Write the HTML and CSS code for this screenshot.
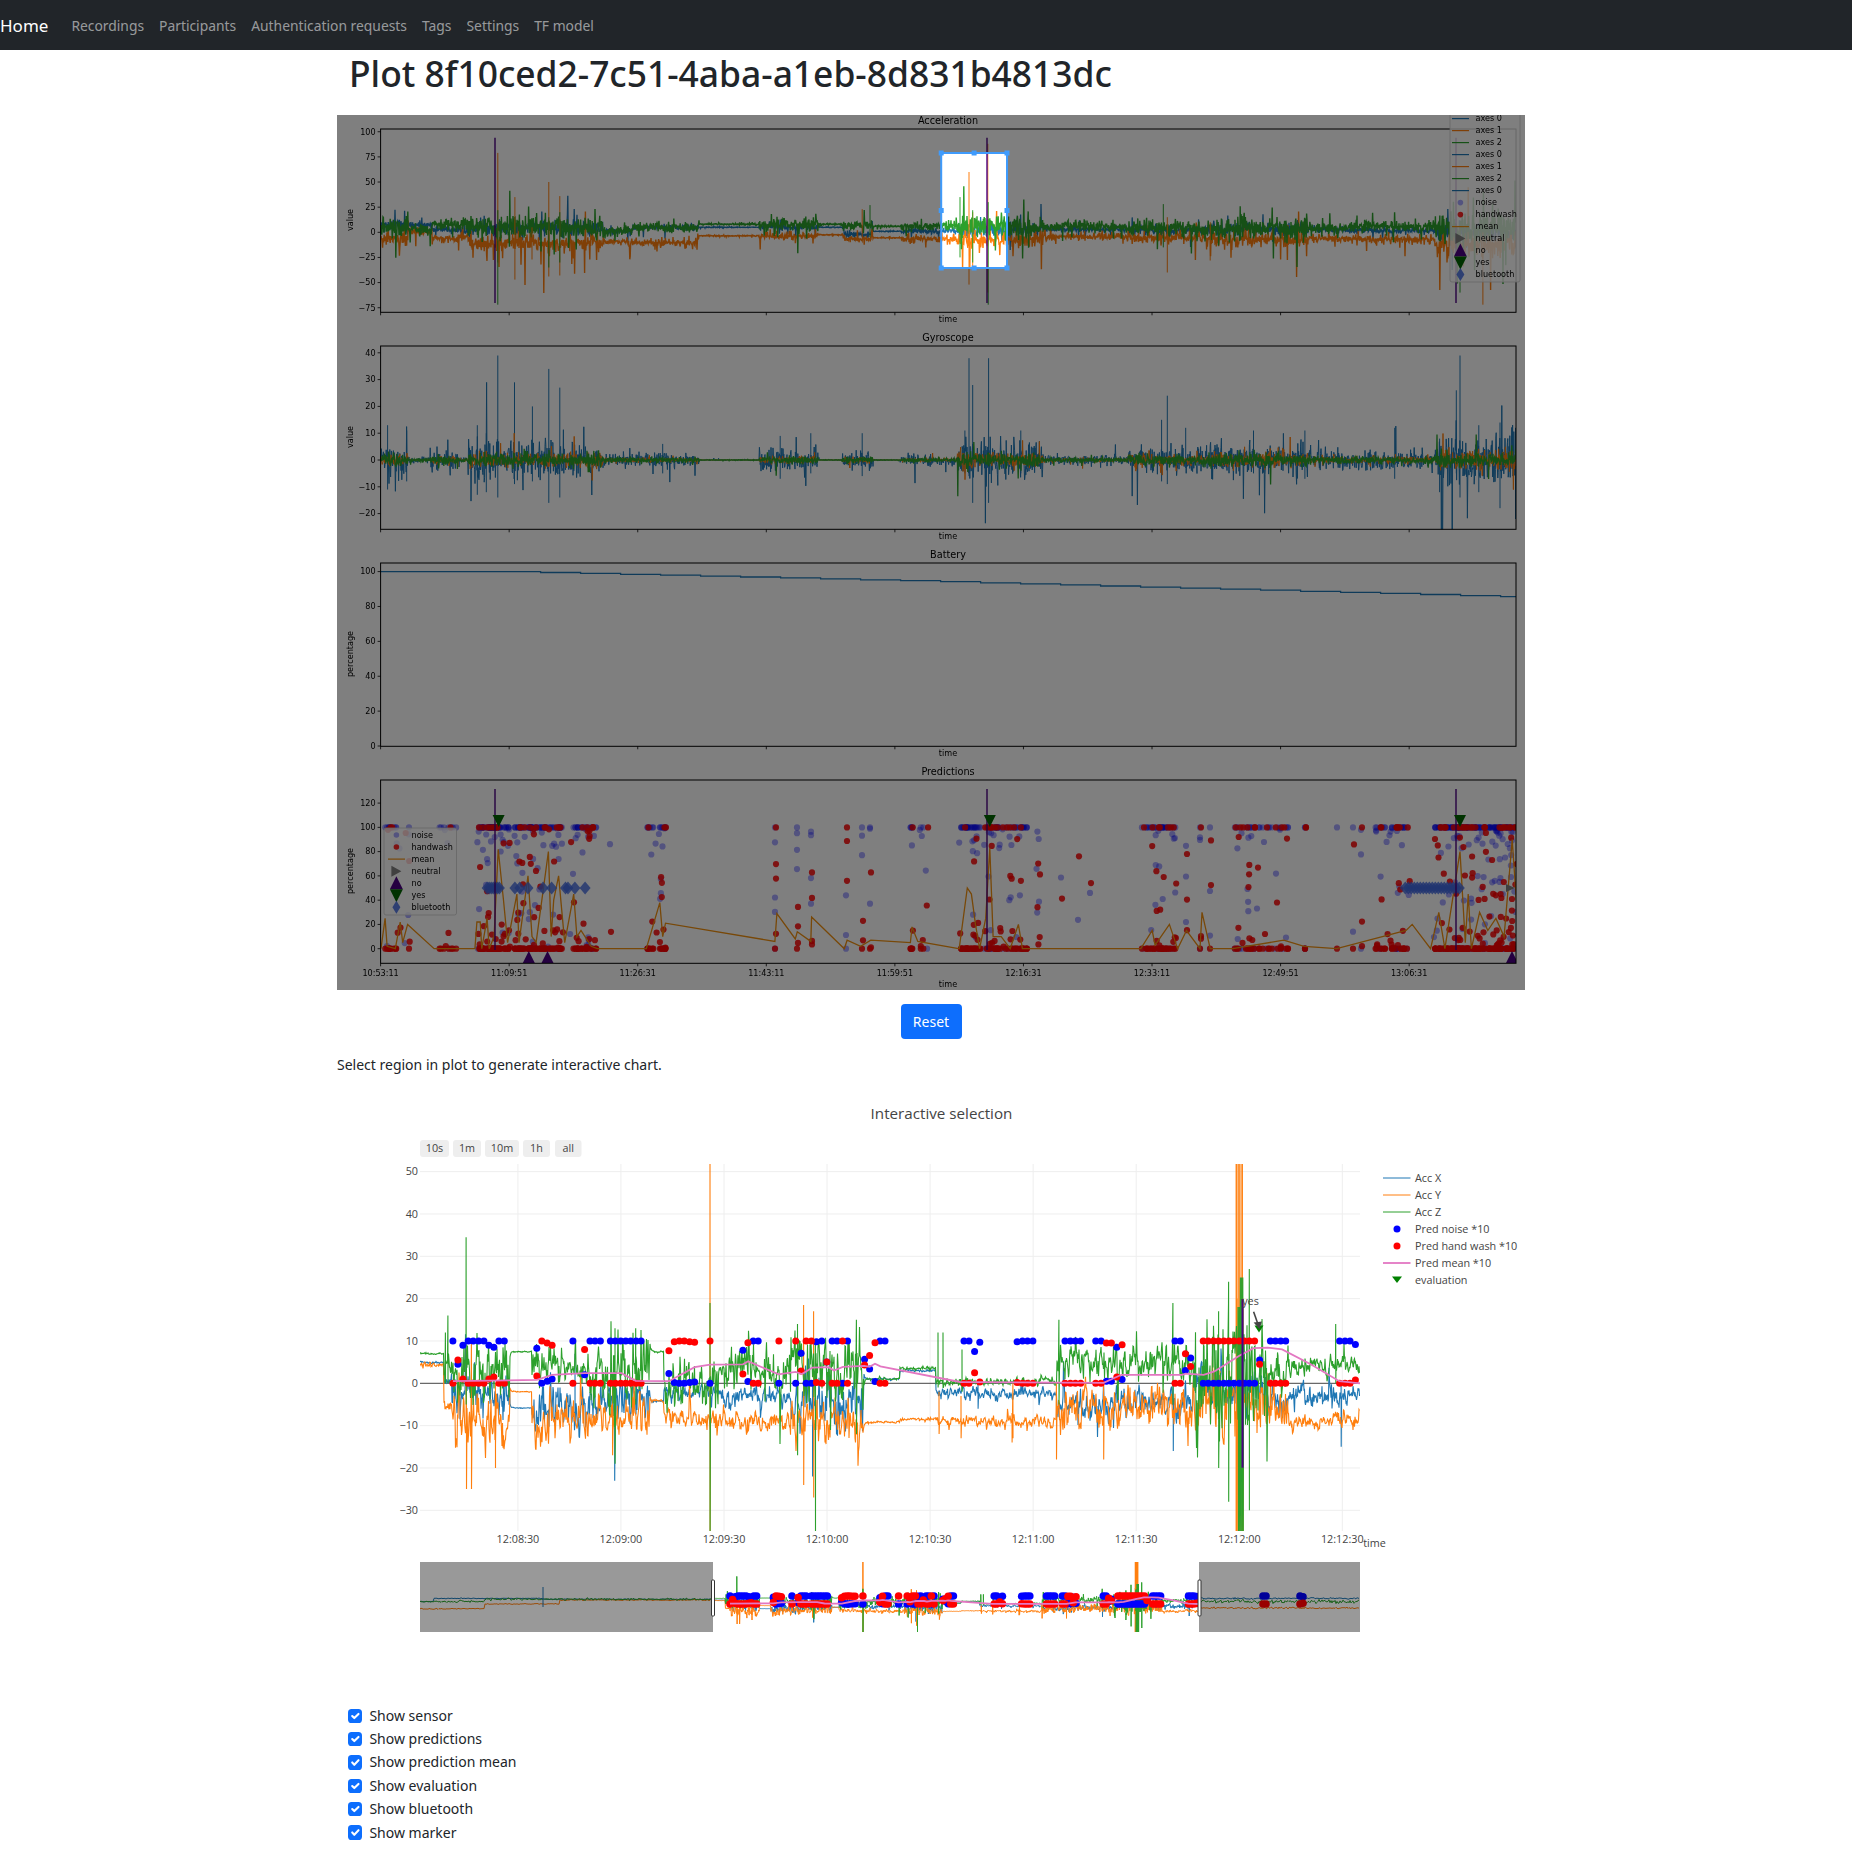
FILE: index.html
```html
<!DOCTYPE html>
<html lang="en">
<head>
  <meta charset="UTF-8" />
  <meta name="viewport" content="width=device-width, initial-scale=1.0" />
  <title>Plot 8f10ced2-7c51-4aba-a1eb-8d831b4813dc</title>
  <link rel="stylesheet" href="styles.css">
</head>
<body>

  <nav class="navbar">
    <a class="navbar-brand" href="#">Home</a>
    <a class="nav-link" href="#">Recordings</a>
    <a class="nav-link" href="#">Participants</a>
    <a class="nav-link" href="#">Authentication requests</a>
    <a class="nav-link" href="#">Tags</a>
    <a class="nav-link" href="#">Settings</a>
    <a class="nav-link" href="#">TF model</a>
  </nav>

  <main class="container">
    <h1>Plot 8f10ced2-7c51-4aba-a1eb-8d831b4813dc</h1>

    <!-- Static overview with the crop selection on top -->
    <svg id="overview" class="overview" viewBox="337 115 1188 875"></svg>

    <div class="reset-row">
      <button class="btn-primary" type="button">Reset</button>
    </div>

    <p class="hint">Select region in plot to generate interactive chart.</p>

    <!-- Interactive selection with range slider -->
    <svg id="chart" class="chart" viewBox="337 1085 1188 610"></svg>

    <form class="toggles">
      <label class="form-check"><input type="checkbox" checked /> Show sensor</label>
      <label class="form-check"><input type="checkbox" checked /> Show predictions</label>
      <label class="form-check"><input type="checkbox" checked /> Show prediction mean</label>
      <label class="form-check"><input type="checkbox" checked /> Show evaluation</label>
      <label class="form-check"><input type="checkbox" checked /> Show bluetooth</label>
      <label class="form-check"><input type="checkbox" checked /> Show marker</label>
    </form>
  </main>

  <script src="plot.js"></script>

</body>
</html>
```
FILE: styles.css
```css
body {
  font-family: "Noto Sans", sans-serif;
  font-size: 14px;
  line-height: 24px;
  margin: 0;
  padding: 0;
  background: #fff;
  color: #212529;
}

.navbar {
  display: flex;
  align-items: center;
  gap: 15px;
  box-sizing: border-box;
  height: 50px;
  padding-top: 2px;
  background: #212529;
}

.navbar-brand {
  color: #fff;
  font-size: 17px;
  text-decoration: none;
  margin-right: 8px;
}

.nav-link {
  color: rgba(255, 255, 255, 0.55);
  font-size: 13.85px;
  text-decoration: none;
}

.container {
  width: 1188px;
  margin-left: 337px;
}

h1 {
  font-size: 35.4px;
  font-weight: 500;
  line-height: 46px;
  margin: 0 0 19px;
  padding-left: 12px;
  white-space: nowrap;
}

.overview {
  display: block;
  width: 1188px;
  height: 875px;
  filter: blur(0.3px);
}

.reset-row {
  display: flex;
  justify-content: center;
  margin-top: 14px;
}

.btn-primary {
  width: 61px;
  height: 35px;
  padding: 0;
  background-color: #0d6efd;
  color: white;
  border: none;
  border-radius: 4px;
  font-family: inherit;
  font-size: 14px;
}

.hint {
  margin: 14px 0 8px;
}

.chart {
  display: block;
  width: 1188px;
  height: 610px;
}

.toggles {
  margin-top: 9px;
  padding-left: 11px;
}

.form-check {
  display: flex;
  align-items: center;
  gap: 7px;
  height: 23.4px;
}

.form-check input {
  appearance: none;
  width: 14.4px;
  height: 14.4px;
  margin: 0;
  border-radius: 3.6px;
  background-color: #0d6efd;
  background-image: url("data:image/svg+xml,%3csvg xmlns='http://www.w3.org/2000/svg' viewBox='0 0 20 20'%3e%3cpath fill='none' stroke='%23fff' stroke-linecap='round' stroke-linejoin='round' stroke-width='3' d='M6 10l3 3l6-6'/%3e%3c/svg%3e");
}

/* svg text */
.mpl {
  font-family: "DejaVu Sans", sans-serif;
  font-size: 8.1px;
  fill: #000;
}

.mpl-title {
  font-size: 9.7px;
}

.pl {
  font-family: "Open Sans", sans-serif;
  font-size: 10.8px;
  fill: #444;
}

.pl-title {
  font-size: 15.2px;
}
```
FILE: plot.js
```js
// Small seeded generator so the noise comes out the same on every load
let seed = 20240;
function rnd() {
  seed = (seed + 0x6D2B79F5) | 0;
  let t = Math.imul(seed ^ (seed >>> 15), 1 | seed);
  t = (t + Math.imul(t ^ (t >>> 7), 61 | t)) ^ t;
  return ((t ^ (t >>> 14)) >>> 0) / 4294967296;
}
function randn() {
  return Math.sqrt(-2 * Math.log(rnd() + 1e-6)) * Math.cos(6.2832 * rnd());
}
function heavy() {
  return randn() * (rnd() < 0.08 ? 2.2 : 0.7);
}
function calm() {
  return randn() * (rnd() < 0.04 ? 1.7 : 0.5);
}

function pathOf(pts) {
  return 'M' + pts.map(p => p[0].toFixed(1) + ' ' + p[1].toFixed(1)).join('L');
}
function stroke(d, color, w, extra) {
  return `<path d="${d}" fill="none" stroke="${color}" stroke-width="${w}" ${extra || ''}/>`;
}
function label(x, y, s, cls, anchor, extra) {
  return `<text x="${x}" y="${y}" dy=".35em" class="${cls}" text-anchor="${anchor || 'middle'}" ${extra || ''}>${s}</text>`;
}
function dot(x, y, r, color, op) {
  return `<circle cx="${x.toFixed(1)}" cy="${y.toFixed(1)}" r="${r}" fill="${color}" ${op ? `opacity="${op}"` : ''}/>`;
}
function tri(x, y, w, h, color) {
  return `<path d="M${x - w} ${y + h}L${x + w} ${y + h}L${x} ${y - h}Z" fill="${color}"/>`;
}

/* ---------- overview (matplotlib figure) ---------- */

const L = 380.6, R = 1516;
const BLUE = '#1f77b4', ORANGE = '#ff7f0e', GREEN = '#2ca02c', INDIGO = '#4b0082';
const MEAN = '#f09010', ROYAL = '#4169e1';
const z2 = v => 330 + v / 2.45;
const z3 = v => 900 + v / 2.45;

// [right edge, amplitude of the movement]
const ENV = [[408, 5], [430, 1], [459, 3], [468, 1], [603, 6], [699, 2], [759, 0.2], [818, 3], [842, 0.2],
  [873, 2.5], [901, 0.2], [957, 1.5], [1043, 6], [1128, 1.5], [1210, 4], [1308, 6], [1435, 3], [1517, 8]];
function env(x) {
  return ENV.find(e => x <= e[0])[1];
}

// [right edge, axis 0, axis 1, axis 2]
const LEVELS = [[408, 7, -3, 5], [432, 7, 2, 3], [461, 3, -4, 8], [471, 1, -3, 9], [603, 4, -7, 5], [632, 1, -8, 2],
  [697, 5, -9, 5], [759, 5, -3, 8], [844, 5, -2, 8], [871, -2, -5, 7], [942, 1, -5, 6], [1007, 2, -5, 6],
  [1128, 3, -3, 6], [1210, 2, -3, 4], [1349, 3, -4, 4], [1435, 2, -5, 6], [1517, 0, -8, 4]];

function noisy(yOf, valueAt) {
  const pts = [];
  for (let x = L; x < R; x += 0.4) pts.push([x, yOf(valueAt(x))]);
  return pathOf(pts);
}

function spikes(list, yOf, color) {
  return list.map(s => stroke(`M${s[0].toFixed(1)} ${yOf(s[1]).toFixed(1)}V${yOf(s[2]).toFixed(1)}`, color, 1)).join('');
}

function frame(top, title, ylabel, yOf, ticks, timeY) {
  const bottom = top + 183.3;
  let s = `<rect x="${L}" y="${top}" width="${R - L}" height="183.3" fill="none" stroke="#000" stroke-width="1"/>`;
  for (let i = 0; i < 9; i++) {
    const x = L + 128.57 * i;
    s += stroke(`M${x} ${bottom}v3`, '#000', 0.8);
  }
  ticks.forEach(t => {
    s += stroke(`M${L} ${yOf(t)}h-3`, '#000', 0.8);
    s += label(L - 5, yOf(t), String(t).replace('-', '−'), 'mpl', 'end');
  });
  s += label(948, top - 8, title, 'mpl mpl-title');
  s += label(948, timeY || bottom + 7, 'time', 'mpl');
  const ly = top + 91;
  s += label(350, ly, ylabel, 'mpl', 'middle', `transform="rotate(-90 350 ${ly})"`);
  return s;
}

function marks(x, y0, y1) {
  return stroke(`M${x} ${y0}V${y1}`, INDIGO, 1.4);
}

function legend(x, y, h, rows, step, firstY) {
  let s = `<rect x="${x}" y="${y}" width="${rows.w}" height="${h}" rx="2" fill="#fff" fill-opacity=".8" stroke="#ccc" stroke-width=".8"/>`;
  const dx = rows.dx || 0;
  rows.items.forEach((it, i) => {
    const ry = firstY + step * i;
    const mx = x + dx + 10.4;
    if (it[1] === 'line') s += stroke(`M${x + dx + 2} ${ry}h17`, it[2], 1.2);
    if (it[1] === 'noise') s += dot(mx, ry, 2.8, '#0000ff', 0.35);
    if (it[1] === 'hand') s += dot(mx, ry, 2.8, '#ff0000', 0.85);
    if (it[1] === 'neutral') s += `<path d="M${mx - 5} ${ry - 5.5}L${mx + 5} ${ry}L${mx - 5} ${ry + 5.5}Z" fill="#808080"/>`;
    if (it[1] === 'no') s += tri(mx, ry - 0.5, 6.5, 6.5, INDIGO);
    if (it[1] === 'yes') s += tri(mx, ry + 0.5, 6.5, -6.5, '#006400');
    if (it[1] === 'bt') s += `<path d="M${mx} ${ry - 6.5}L${mx + 4} ${ry}L${mx} ${ry + 6.5}L${mx - 4} ${ry}Z" fill="${ROYAL}" opacity=".85"/>`;
    s += label(x + dx + 25.5, ry, it[0], 'mpl', 'start');
  });
  return s;
}

function drawOverview() {
  const ya = v => 232.3 - v * 1.0056;
  const yg = v => 460 - v * 2.68;
  const yb = v => 746 - v * 1.744;
  const yp = v => 948.7 - v * 1.2135;
  let s = '<rect x="337" y="115" width="1188" height="875" fill="#fff"/>';

  // acceleration
  s += `<clipPath id="c1"><rect x="${L}" y="129" width="${R - L}" height="183.3"/></clipPath><g clip-path="url(#c1)">`;
  const level = (x, ch) => LEVELS.find(e => x <= e[0])[ch];
  const wide = x => (env(x) < 0.5 ? 0.5 : Math.max(env(x), 2.5) * 1.35);
  s += stroke(noisy(ya, x => level(x, 1) + wide(x) * 0.6 * heavy()), BLUE, 1.3);
  s += stroke(noisy(ya, x => level(x, 2) + wide(x) * 0.9 * (rnd() < 0.7 ? -Math.abs(heavy()) : heavy()) - 0.3), ORANGE, 1.4);
  s += stroke(noisy(ya, x => level(x, 3) + wide(x) * 1.0 * heavy()), GREEN, 1.4);
  s += spikes([[z2(411), 79, -30], [z2(453), 35, -47], [z2(495), 5, -27], [z2(536), 50, -44], [z2(563), 36, -43], [z2(1304), 23, -5],
    [z3(169), 60, -52], [z3(178), 20, -35], [z3(215), 88, -60], [z3(655), 15, -40], [z3(760), 10, -28], [z3(1428), 0, -72]], ya, ORANGE);
  s += spikes([[z2(411), 22, -72], [z2(536), 15, -35], [z2(563), 20, -30], [z2(1323), 27, -5], [z3(147), 35, -25], [z3(178), 22, -30],
    [z3(216), 30, -72], [z3(645), 28, -15], [z3(1372), 8, -60]], ya, GREEN);
  s += marks(495, 137.7, 303) + marks(987, 137.7, 303) + marks(1456, 137.7, 303);
  s += '</g>';
  s += frame(129, 'Acceleration', 'value', ya, [100, 75, 50, 25, 0, -25, -50, -75]);

  // gyroscope
  s += `<clipPath id="c2"><rect x="${L}" y="346" width="${R - L}" height="183.3"/></clipPath><g clip-path="url(#c2)">`;
  s += stroke(noisy(yg, x => env(x) * 1.2 * calm()), BLUE, 1);
  s += spikes([[411, 39, -14], [452, 29, -9], [496, 20, -8], [536, 34, -16], [563, 27, -14], [361, 13, -13], [141, 13, -11], [188, 11, -8],
    [383, 10, -12], [1103, 9, -7], [1178, 10, -5], [1304, 10, -6], [815, 6, -5]].map(e => [z2(e[0]), e[1], e[2]]), yg, BLUE);
  s += spikes([[169, 38, -6], [178, 28, -16], [159, 11, -5], [217, 38, -16], [296, 11, -5], [655, 24, -9], [641, 15, -8], [700, 12, -3],
    [866, 11, -5], [992, 11, -7], [1212, 12, -7], [1363, 26, -5], [1372, 39, -14], [1418, 13, -12], [1470, 14, -18], [1508, 12, -22], [1322, 8, -12]]
    .map(e => [z3(e[0]), e[1], e[2]]), yg, BLUE);
  s += stroke(noisy(yg, x => env(x) * 0.45 * calm()), ORANGE, 1);
  s += stroke(noisy(yg, x => Math.min(env(x), 5) * 0.5 * calm()), GREEN, 1.3);
  s += '</g>';
  s += frame(346, 'Gyroscope', 'value', yg, [40, 30, 20, 10, 0, -10, -20]);

  // battery
  const bat = [];
  let charge = 100;
  for (let x = L; x < R; x += 40) {
    bat.push([x, yb(charge)]);
    bat.push([Math.min(x + 40, R), yb(charge)]);
    if (x > 470) charge -= 0.52;
    if (x > 900) charge -= 0.09;
  }
  s += stroke(pathOf(bat), BLUE, 1.3);
  s += frame(563, 'Battery', 'percentage', yb, [100, 80, 60, 40, 20, 0]);

  // predictions
  const clusters = [[383, 410, 18], [434, 461, 10], [477, 510, 70], [514, 563, 90], [570, 597, 34], [610, 610, 1], [644, 667, 24],
    [775, 775, 5], [797, 797, 4], [811, 811, 4], [846, 846, 3], [862, 862, 3], [870, 870, 3], [910, 928, 12], [959, 1027, 90], [1036, 1040, 5],
    [1061, 1061, 1], [1078, 1078, 1], [1090, 1090, 1], [1141, 1178, 42], [1186, 1186, 3], [1200, 1200, 4], [1210, 1210, 3], [1232, 1288, 44],
    [1305, 1305, 4], [1337, 1337, 1], [1353, 1353, 2], [1361, 1361, 3], [1374, 1410, 36], [1433, 1516, 180]];
  let blues = '', reds = '';
  clusters.forEach(c => {
    for (let i = 0; i < c[2]; i++) {
      const x = c[0] + rnd() * (c[1] - c[0]);
      const k = rnd();
      const spread = c[1] - c[0] < 5 ? 0.3 : 0.55;
      let v = rnd() * 100;
      if (k < spread) v = 100;
      else if (k < spread + 0.15) v = 0;
      else if (k < spread + 0.27) v = 100 - rnd() * 18;
      blues += dot(x, yp(v), 3.1, '#0000ff', 0.35);
      reds += dot(x + (v === 100 ? 0 : 1), yp(100 - v), 3.1, '#ff0000', 0.85);
    }
  });

  const m4 = [[125, 0], [135, 25], [140, 2], [160, 0], [172, 22], [178, 5], [190, 20], [255, 0], [355, 0], [360, 22], [368, 22], [372, 0], [385, 25], [390, 0],
    [402, 10], [412, 82], [425, 40], [435, 5], [458, 45], [463, 5], [485, 60], [495, 10], [505, 5], [535, 80], [542, 10], [548, 40], [560, 60], [575, 5],
    [597, 45], [605, 10], [615, 15], [640, 2], [655, 0], [775, 0], [808, 38], [815, 10], [822, 21], [1090, 6], [1095, 29], [1140, 8], [1145, 14],
    [1178, 6], [1180, 26], [1260, 0], [1267, 7], [1300, 2], [1325, 7], [1422, 5], [1426, 18], [1440, 6], [1540, 0]].map(p => [330 + p[0] / 2.45, yp(p[1])]);
  const m5 = [[145, 0], [165, 50], [175, 45], [185, 20], [195, 0], [210, 25], [220, 83], [228, 10], [248, 10], [270, 0], [290, 20], [300, 0], [590, 0], [618, 15],
    [625, 3], [660, 20], [680, 0], [702, 15], [735, 0], [740, 30], [760, 0], [815, 0], [940, 7], [990, 2], [1070, 0], [1240, 15], [1255, 20], [1300, 0], [1320, 30],
    [1335, 0], [1372, 80], [1385, 5], [1392, 45], [1400, 0], [1420, 30], [1440, 15], [1460, 25], [1480, 10], [1500, 90], [1510, 40]].map(p => [z3(p[0]), yp(p[1])]);

  s += `<clipPath id="c4"><rect x="${L}" y="780" width="${R - L}" height="183.3"/></clipPath><g clip-path="url(#c4)">`;
  s += blues + reds;
  s += stroke(pathOf(m4.concat(m5)), MEAN, 1.3);

  const diamonds = [385, 390, 395, 400, 405, 410, 415, 453, 465, 485, 522, 543, 577, 583, 600, 625].map(z => 330 + z / 2.45);
  for (let x = z3(1238); x < z3(1375); x += 3) diamonds.push(x);
  diamonds.forEach(x => {
    s += `<path d="M${x} ${yp(50) - 6.5}L${x + 5.5} ${yp(50)}L${x} ${yp(50) + 6.5}L${x - 5.5} ${yp(50)}Z" fill="${ROYAL}" opacity=".8"/>`;
  });
  s += `<path d="M1506 ${yp(50) - 4}L1515 ${yp(50)}L1506 ${yp(50) + 4}Z" fill="#808080"/>`;
  s += marks(495, 789, 950) + marks(987, 789, 950) + marks(1456, 789, 950);
  [498.6, 989.8, 1460].forEach(x => { s += tri(x, 821, 6, -6, '#006400'); });
  [528.8, 547.5, 1512].forEach(x => { s += tri(x, 957, 6, 6, INDIGO); });
  s += '</g>';
  s += frame(780, 'Predictions', 'percentage', yp, [120, 100, 80, 60, 40, 20, 0], 984);

  // time labels under the last axes
  const times = ['10:53:11', '11:09:51', '11:26:31', '11:43:11', '11:59:51', '12:16:31', '12:33:11', '12:49:51', '13:06:31'];
  times.forEach((t, i) => { s += label(L + 128.57 * i, 972.7, t, 'mpl'); });

  // legends
  const tail = [['noise', 'noise'], ['handwash', 'hand'], ['mean', 'line', MEAN], ['neutral', 'neutral'], ['no', 'no'], ['yes', 'yes'], ['bluetooth', 'bt']];
  s += legend(384, 828, 87, { w: 72.5, dx: 2, items: tail }, 12.05, 835);
  const axesRows = [['axes 0', 'line', BLUE], ['axes 1', 'line', ORANGE], ['axes 2', 'line', GREEN], ['axes 0', 'line', BLUE], ['axes 1', 'line', ORANGE],
    ['axes 2', 'line', GREEN], ['axes 0', 'line', BLUE]];
  s += legend(1450, 113, 169, { w: 70, items: axesRows.concat(tail) }, 12, 118.6);

  // dim everything except the selection
  const sx0 = 941.2, sx1 = 1007, sy0 = 153, sy1 = 268;
  s += `<path fill-rule="evenodd" fill="#000" fill-opacity=".5" d="M337 115H1525V990H337ZM${sx0} ${sy0}V${sy1}H${sx1}V${sy0}Z"/>`;
  s += `<rect x="${sx0}" y="${sy0}" width="${sx1 - sx0}" height="${sy1 - sy0}" fill="none" stroke="#3f9bfc" stroke-width="2"/>`;
  const mx = (sx0 + sx1) / 2, my = (sy0 + sy1) / 2;
  [[sx0, sy0], [mx, sy0], [sx1, sy0], [sx0, my], [sx1, my], [sx0, sy1], [mx, sy1], [sx1, sy1]].forEach(h => {
    s += `<rect x="${h[0] - 2.5}" y="${h[1] - 2.5}" width="5" height="5" fill="#3f9bfc"/>`;
  });

  document.getElementById('overview').innerHTML = s;
}

/* ---------- interactive selection (plotly chart) ---------- */

const PL = '#1f77b4';
const PO = '#ff7f0e';
const PG = '#2ca02c';
const PM = '#e377c2';
const a6 = z => 400 + z / 2.8;
const a7 = z => 1000 + z / 2.8;
const cy = v => 1383.3 - v * 4.233;
const sx = x => 713 + (x - 420) * 0.517;
const sy = v => 1604 - v * 0.8;

// [from, to, axis x, noise, axis y, noise, axis z, noise]
const SEGMENTS = [
  [420, 444, 5, 0.2, 4.5, 0.5, 7, 0.2],
  [444, 452, 1, 1, -5, 2, 6, 4],
  [452, 510, -3, 4, -9, 5, 2, 6],
  [510, 532, -5.8, 0.1, -2, 0.1, 7.5, 0.1],
  [532, 589, -6, 4, -9, 4, 4, 4],
  [589, 650, -4, 4, -8, 4, 3, 7],
  [650, 664, -4.2, 0.2, -4, 0.3, 7.5, 0.2],
  [664, 720, -2, 1.5, -8, 2.5, 0, 5],
  [720, 790, -3, 2, -9, 2, 3, 4],
  [790, 864, -5, 5, -9, 4, 4, 7],
  [864, 900, 1, 0.2, -9.2, 0.2, 1, 0.2],
  [900, 936, 3, 0.3, -8.5, 0.3, 3.5, 0.3],
  [936, 1057, -2.5, 1.2, -9, 1.1, 0.3, 0.8],
  [1057, 1193, -5, 3, -6, 4, 5, 3.5],
  [1193, 1268, -2, 4, -5, 7, 0, 13],
  [1268, 1289, -4, 3, -6, 4, 3, 4],
  [1289, 1360, -3, 2.5, -9, 1.5, 4, 2]
];

function track(ch, extra) {
  const pts = [];
  let drift = 0;
  SEGMENTS.forEach(seg => {
    for (let x = seg[0]; x < seg[1]; x += 0.5) {
      drift = 0.5 * drift + seg[3 + ch * 2] * randn() * (rnd() < 0.06 ? 1.2 : 0.5);
      pts.push([x, seg[2 + ch * 2] + drift]);
    }
  });
  extra.forEach(e => {
    pts.push([e[0], e[1]]);
    pts.push([e[0] + 0.1, e[2]]);
  });
  pts.sort((p, q) => p[0] - q[0]);
  return pts;
}

// [position in the crop, noise value]; hand wash value is 10 minus noise
const DOTS = [[148, 10], [162, 4.5], [176, 9], [191, 10], [205, 10], [220, 10], [235, 10], [249, 9], [263, 8.5], [277, 10], [292, 10],
  [383, 8.3], [397, 0], [412, 0.5], [426, 1], [484, 10], [517, 2], [532, 10], [546, 10], [561, 10],
  [589, 10], [603, 10], [618, 10], [632, 10], [646, 10], [661, 10], [675, 10],
  [753, 2.3], [768, 0.2], [782, 0], [796, 0], [811, 0.2], [825, 0.3], [868, 0], [960, 7.8], [974, 0.4], [989, 10], [1003, 10], [1061, 0],
  [1108, 0], [1123, 7.1], [1137, 0], [1152, 0], [1166, 9.8], [1181, 10], [1195, 5], [1210, 10], [1224, 10], [1239, 0], [1253, 10],
  [1301, 5.7], [1315, 3.4], [1330, 0.4], [1344, 10], [1358, 10]].map(d => [a6(d[0]), d[1]])
  .concat([[964, 10], [969, 10], [974.6, 7.5], [979.8, 9.7]])
  .concat([[48, 9.8], [63, 10], [77, 10], [92, 10], [182, 10], [197, 10], [211, 10], [226, 10], [268, 10], [283, 10], [298, 0.5], [312, 0.5], [327, 8.5], [342, 0.9],
    [490, 10], [505, 10], [519, 3], [534, 6], [569, 0], [583, 0], [598, 0], [612, 0], [627, 0], [641, 0], [655, 0], [670, 0], [684, 0], [698, 0], [713, 0],
    [727, 5.5], [757, 10], [771, 10], [786, 10], [800, 10], [951, 10], [966, 10], [980, 10], [995, 9.2]].map(d => [a7(d[0]), d[1]]));

const MEANLINE = [[148, 0.5], [383, 0.8], [426, 2], [517, 2.4], [620, 2.4], [660, 0.6], [753, 0.5], [825, 3.8], [868, 4.4], [960, 4.5], [975, 5.2], [1060, 2.1],
  [1108, 2.7], [1125, 2.2], [1155, 3.7], [1200, 3.8], [1215, 3], [1240, 3.9], [1300, 4.1], [1315, 3.9], [1330, 4.6], [1345, 4], [1568, 0.3]].map(p => [a6(p[0]), p[1]])
  .concat([[290, 0.1], [340, 2], [510, 2], [520, 2.3], [570, 2], [600, 2.8], [670, 6.5], [710, 8.3], [750, 8.4], [790, 8], [870, 4.5], [950, 0.5], [1008, 0]].map(p => [a7(p[0]), p[1]]));

function drawChart() {
  let s = label(941.5, 1114, 'Interactive selection', 'pl pl-title');

  // range buttons
  [['10s', 420, 29], ['1m', 453, 28], ['10m', 485, 34], ['1h', 523, 27], ['all', 555, 26.5]].forEach(b => {
    s += `<rect x="${b[1]}" y="1140" width="${b[2]}" height="17" rx="3" fill="#eee"/>`;
    s += label(b[1] + b[2] / 2, 1148.5, b[0], 'pl');
  });

  // grid
  [50, 40, 30, 20, 10, -10, -20, -30].forEach(v => {
    s += stroke(`M420 ${cy(v)}H1360`, '#eee', 1);
  });
  const ticks = ['12:08:30', '12:09:00', '12:09:30', '12:10:00', '12:10:30', '12:11:00', '12:11:30', '12:12:00', '12:12:30'];
  ticks.forEach((t, i) => {
    const x = 517.9 + 103.05 * i;
    s += stroke(`M${x} 1164V1531`, '#eee', 1);
    s += label(x, 1539, t, 'pl');
  });
  [50, 40, 30, 20, 10, 0, -10, -20, -30].forEach(v => {
    s += label(418, cy(v), String(v).replace('-', '−'), 'pl', 'end');
  });
  s += label(1374.5, 1543, 'time', 'pl');
  s += stroke(`M420 ${cy(0)}H1360`, '#444', 1);

  // sensor tracks, with the large swings written out by hand
  const xs = track(0, [[a6(490), 7, -10], [a6(601), 0, -23], [a6(1155), 0, -22], [a7(485), 0, -16], [a7(955), 0, -15], [978, 0, -6]]);
  const ys = track(1, [[a6(186), 8, -25], [a6(200), 10, -25], [a6(267), 0, -20], [a6(595), 0, -17], [a6(868), 60, -35], [a6(1130), 18.5, -24], [a6(1158), 17, -27],
    [a7(158), 0, -18], [a7(290), 0, -18], [a7(36), 0, -13], [939, -2, -12], [961, -3, -13], [1012, -7, -14], [1237, 20, -35], [1243, 20, -35]]);
  const zs = track(2, [[a6(127), 12, 0], [a6(134), 16, 0], [a6(185), 34.5, -5], [a6(602), 13, -19], [a6(660), 13, -5], [a6(868), 19, -35], [a6(1113), 14, -17], [a6(1163), 10, -35],
    [a6(1278), 15, -12], [a7(165), 15, -5], [a7(484), 19, -5], [a7(612), 17, -20], [a7(640), 24, -28], [a7(698), 27, -30], [a7(940), 14, 0], [938, 12, -1], [943, 12, -1], [962, 8, -2]]);
  for (let x = 1238; x < 1243; x += 1.2) {
    zs.push([x, x < 1240 ? 18 : 25]);
    zs.push([x + 0.5, -35]);
  }
  zs.sort((p, q) => p[0] - q[0]);

  const toChart = pts => pathOf(pts.map(p => [p[0], cy(p[1])]));
  const toSlider = pts => pathOf(pts.map(p => [sx(p[0]), sy(p[1])]));

  s += '<clipPath id="c5"><rect x="420" y="1164" width="940" height="367"/></clipPath><g clip-path="url(#c5)">';
  s += stroke(toChart(xs), PL, 1.1) + stroke(toChart(ys), PO, 1.1);
  // the pale orange band where the signal runs off the scale
  s += `<rect x="1235.7" y="1164" width="7.2" height="367" fill="${PO}" fill-opacity=".55"/>`;
  s += stroke('M1236.3 1164V1531M1239 1164V1531M1242.3 1164V1531', PO, 1.2);
  s += stroke(toChart(zs), PG, 1.1);
  DOTS.forEach(d => { s += dot(d[0], cy(d[1]), 3.5, '#0000ff'); });
  DOTS.forEach(d => { s += dot(d[0], cy(10 - d[1]), 3.5, '#ff0000'); });
  s += stroke(toChart(MEANLINE), PM, 1.8);
  s += '</g>';

  // evaluation marker and its annotation
  s += stroke('M1242.5 1299V1467.7', INDIGO, 2);
  s += `<path d="M1254.5 1325.5L1263.5 1325.5L1259 1332.5Z" fill="#008000"/>`;
  s += stroke('M1253.6 1311.7L1258.6 1326', '#444', 1.6);
  s += `<path d="M1259.4 1329L1253.6 1322.5L1262 1321.5Z" fill="#444"/>`;
  s += label(1250.5, 1301, 'yes', 'pl');

  // legend
  [['Acc X', PL], ['Acc Y', PO], ['Acc Z', PG]].forEach((r, i) => {
    const y = 1178 + 17 * i;
    s += stroke(`M1383 ${y}h27.5`, r[1], 1);
    s += label(1415, y, r[0], 'pl', 'start');
  });
  s += dot(1397, 1229, 3.5, '#0000ff') + label(1415, 1229, 'Pred noise *10', 'pl', 'start');
  s += dot(1397, 1246, 3.5, '#ff0000') + label(1415, 1246, 'Pred hand wash *10', 'pl', 'start');
  s += stroke('M1383 1263h27.5', PM, 1.8) + label(1415, 1263, 'Pred mean *10', 'pl', 'start');
  s += `<path d="M1392 1276.5L1402 1276.5L1397 1283Z" fill="#008000"/>`;
  s += label(1415, 1280, 'evaluation', 'pl', 'start');

  // range slider: same tracks squeezed, plus the quiet stretches either side
  const side = (from, to, b, o, g, n) => {
    const bp = [], op = [], gp = [];
    for (let x = from; x < to; x += 1) {
      bp.push([x, b(x) + n * randn() * 0.4]);
      op.push([x, o(x) + n * randn() * 0.5]);
      gp.push([x, g(x) + n * randn()]);
    }
    return stroke(pathOf(bp.map(p => [p[0], sy(p[1])])), PL, 1) + stroke(pathOf(op.map(p => [p[0], sy(p[1])])), PO, 1) + stroke(pathOf(gp.map(p => [p[0], sy(p[1])])), PG, 1);
  };
  s += '<clipPath id="c6"><rect x="420" y="1562" width="940" height="70"/></clipPath><g clip-path="url(#c6)">';
  s += side(420, 713, x => (x < 434 ? 3 : x < 543 ? 7 : 6), x => (x < 485 ? -6 : x < 560 ? 0 : 5), x => (x < 485 ? 3 : 6), 0.7);
  s += stroke('M543 1587V1607', PL, 1);
  s += side(1199, 1360, () => 7, () => -5, () => 3, 1.2);
  s += stroke(toSlider(xs), PL, 1) + stroke(toSlider(ys), PO, 1);
  s += `<rect x="${sx(1235.7)}" y="1562" width="3.7" height="70" fill="${PO}"/>`;
  s += stroke(toSlider(zs), PG, 1);
  DOTS.forEach(d => { s += dot(sx(d[0]), sy(d[1]), 3.8, '#0000ff'); });
  DOTS.forEach(d => { s += dot(sx(d[0]), sy(10 - d[1]), 3.8, '#ff0000'); });
  [[1263, 10], [1266, 10], [1300, 10], [1303, 9]].forEach(d => {
    s += dot(d[0], sy(d[1]), 3.8, '#0000ff') + dot(d[0], sy(10 - d[1]), 3.8, '#ff0000');
  });
  s += stroke(toSlider(MEANLINE), PM, 1.8);
  s += '</g>';
  s += '<rect x="420" y="1562" width="293" height="70" fill="#000" fill-opacity=".4"/>';
  s += '<rect x="1199" y="1562" width="161" height="70" fill="#000" fill-opacity=".4"/>';
  s += '<rect x="711.5" y="1580" width="3" height="36" rx="1" fill="#fff" stroke="#333"/>';
  s += '<rect x="1198" y="1580" width="3" height="36" rx="1" fill="#fff" stroke="#333"/>';

  document.getElementById('chart').innerHTML = s;
}

drawOverview();
drawChart();
```
